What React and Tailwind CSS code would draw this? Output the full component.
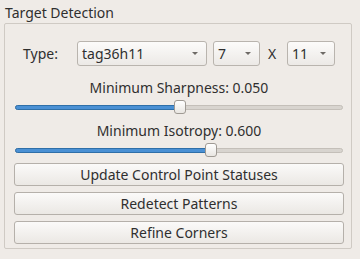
import React from "react";

function Combo({ value, className }) {
  return (
    <div
      className={`h-[25px] flex items-center justify-between pl-[4px] pr-[8px] rounded-[3px] border border-[#b9b4ae] bg-gradient-to-b from-[#fcfbfa] to-[#ece9e6] ${className}`}
    >
      <span>{value}</span>
      <span className="w-0 h-0 border-l-[3px] border-r-[3px] border-t-[3px] border-l-transparent border-r-transparent border-t-[#6e6a66]" />
    </div>
  );
}

function Slider({ pos }) {
  return (
    <div className="relative h-[14px] mx-[1px]">
      <div className="absolute left-0 right-0 top-[5px] h-[5px] rounded-full bg-[#d8d4cf] border border-[#c4bfb9]" />
      <div
        className="absolute left-0 top-[5px] h-[5px] rounded-full bg-[#4a90d4] border border-[#2f6fa8]"
        style={{ width: pos + 4 }}
      />
      <div
        className="absolute top-0 w-[12px] h-[14px] rounded-[3px] border border-[#9f9a94] bg-gradient-to-b from-[#ffffff] to-[#e9e6e2]"
        style={{ left: pos }}
      />
    </div>
  );
}

function Button({ children }) {
  return (
    <button className="w-full h-[23px] rounded-[3px] border border-[#b5b0aa] bg-gradient-to-b from-[#fbfaf9] to-[#ebe8e4] text-[#2f2f2f] text-[14px] leading-none">
      {children}
    </button>
  );
}

export default function App() {
  return (
    <div
      className="w-[360px] h-[259px] bg-[#efebe7] text-[#2f2f2f] px-[4px] pt-[3px] overflow-hidden"
      style={{ fontFamily: '"Noto Sans", "Open Sans", sans-serif' }}
    >
      <div className="text-[14px] leading-[19px] pl-[1px] h-[20px]">Target Detection</div>
      <div className="w-[348px] h-[226px] border border-[#cfcac4] rounded-[2px] pl-[9px] pr-[7px] pt-[17px]">
        <div className="flex items-center text-[14px]">
          <span className="ml-[9px] w-[54px]">Type:</span>
          <Combo value="tag36h11" className="w-[130px]" />
          <Combo value="7" className="w-[47px] ml-[6px]" />
          <span className="ml-[8px] w-[19px]">X</span>
          <Combo value="11" className="w-[48px]" />
        </div>
        <div className="text-center text-[14px] leading-[19px] mt-[12px]">Minimum Sharpness: 0.050</div>
        <div className="mt-[3px]">
          <Slider pos={159} />
        </div>
        <div className="text-center text-[14px] leading-[19px] mt-[7px]">Minimum Isotropy: 0.600</div>
        <div className="mt-[3px]">
          <Slider pos={190} />
        </div>
        <div className="flex flex-col gap-[6px] mt-[6px]">
          <Button>Update Control Point Statuses</Button>
          <Button>Redetect Patterns</Button>
          <Button>Refine Corners</Button>
        </div>
      </div>
    </div>
  );
}
